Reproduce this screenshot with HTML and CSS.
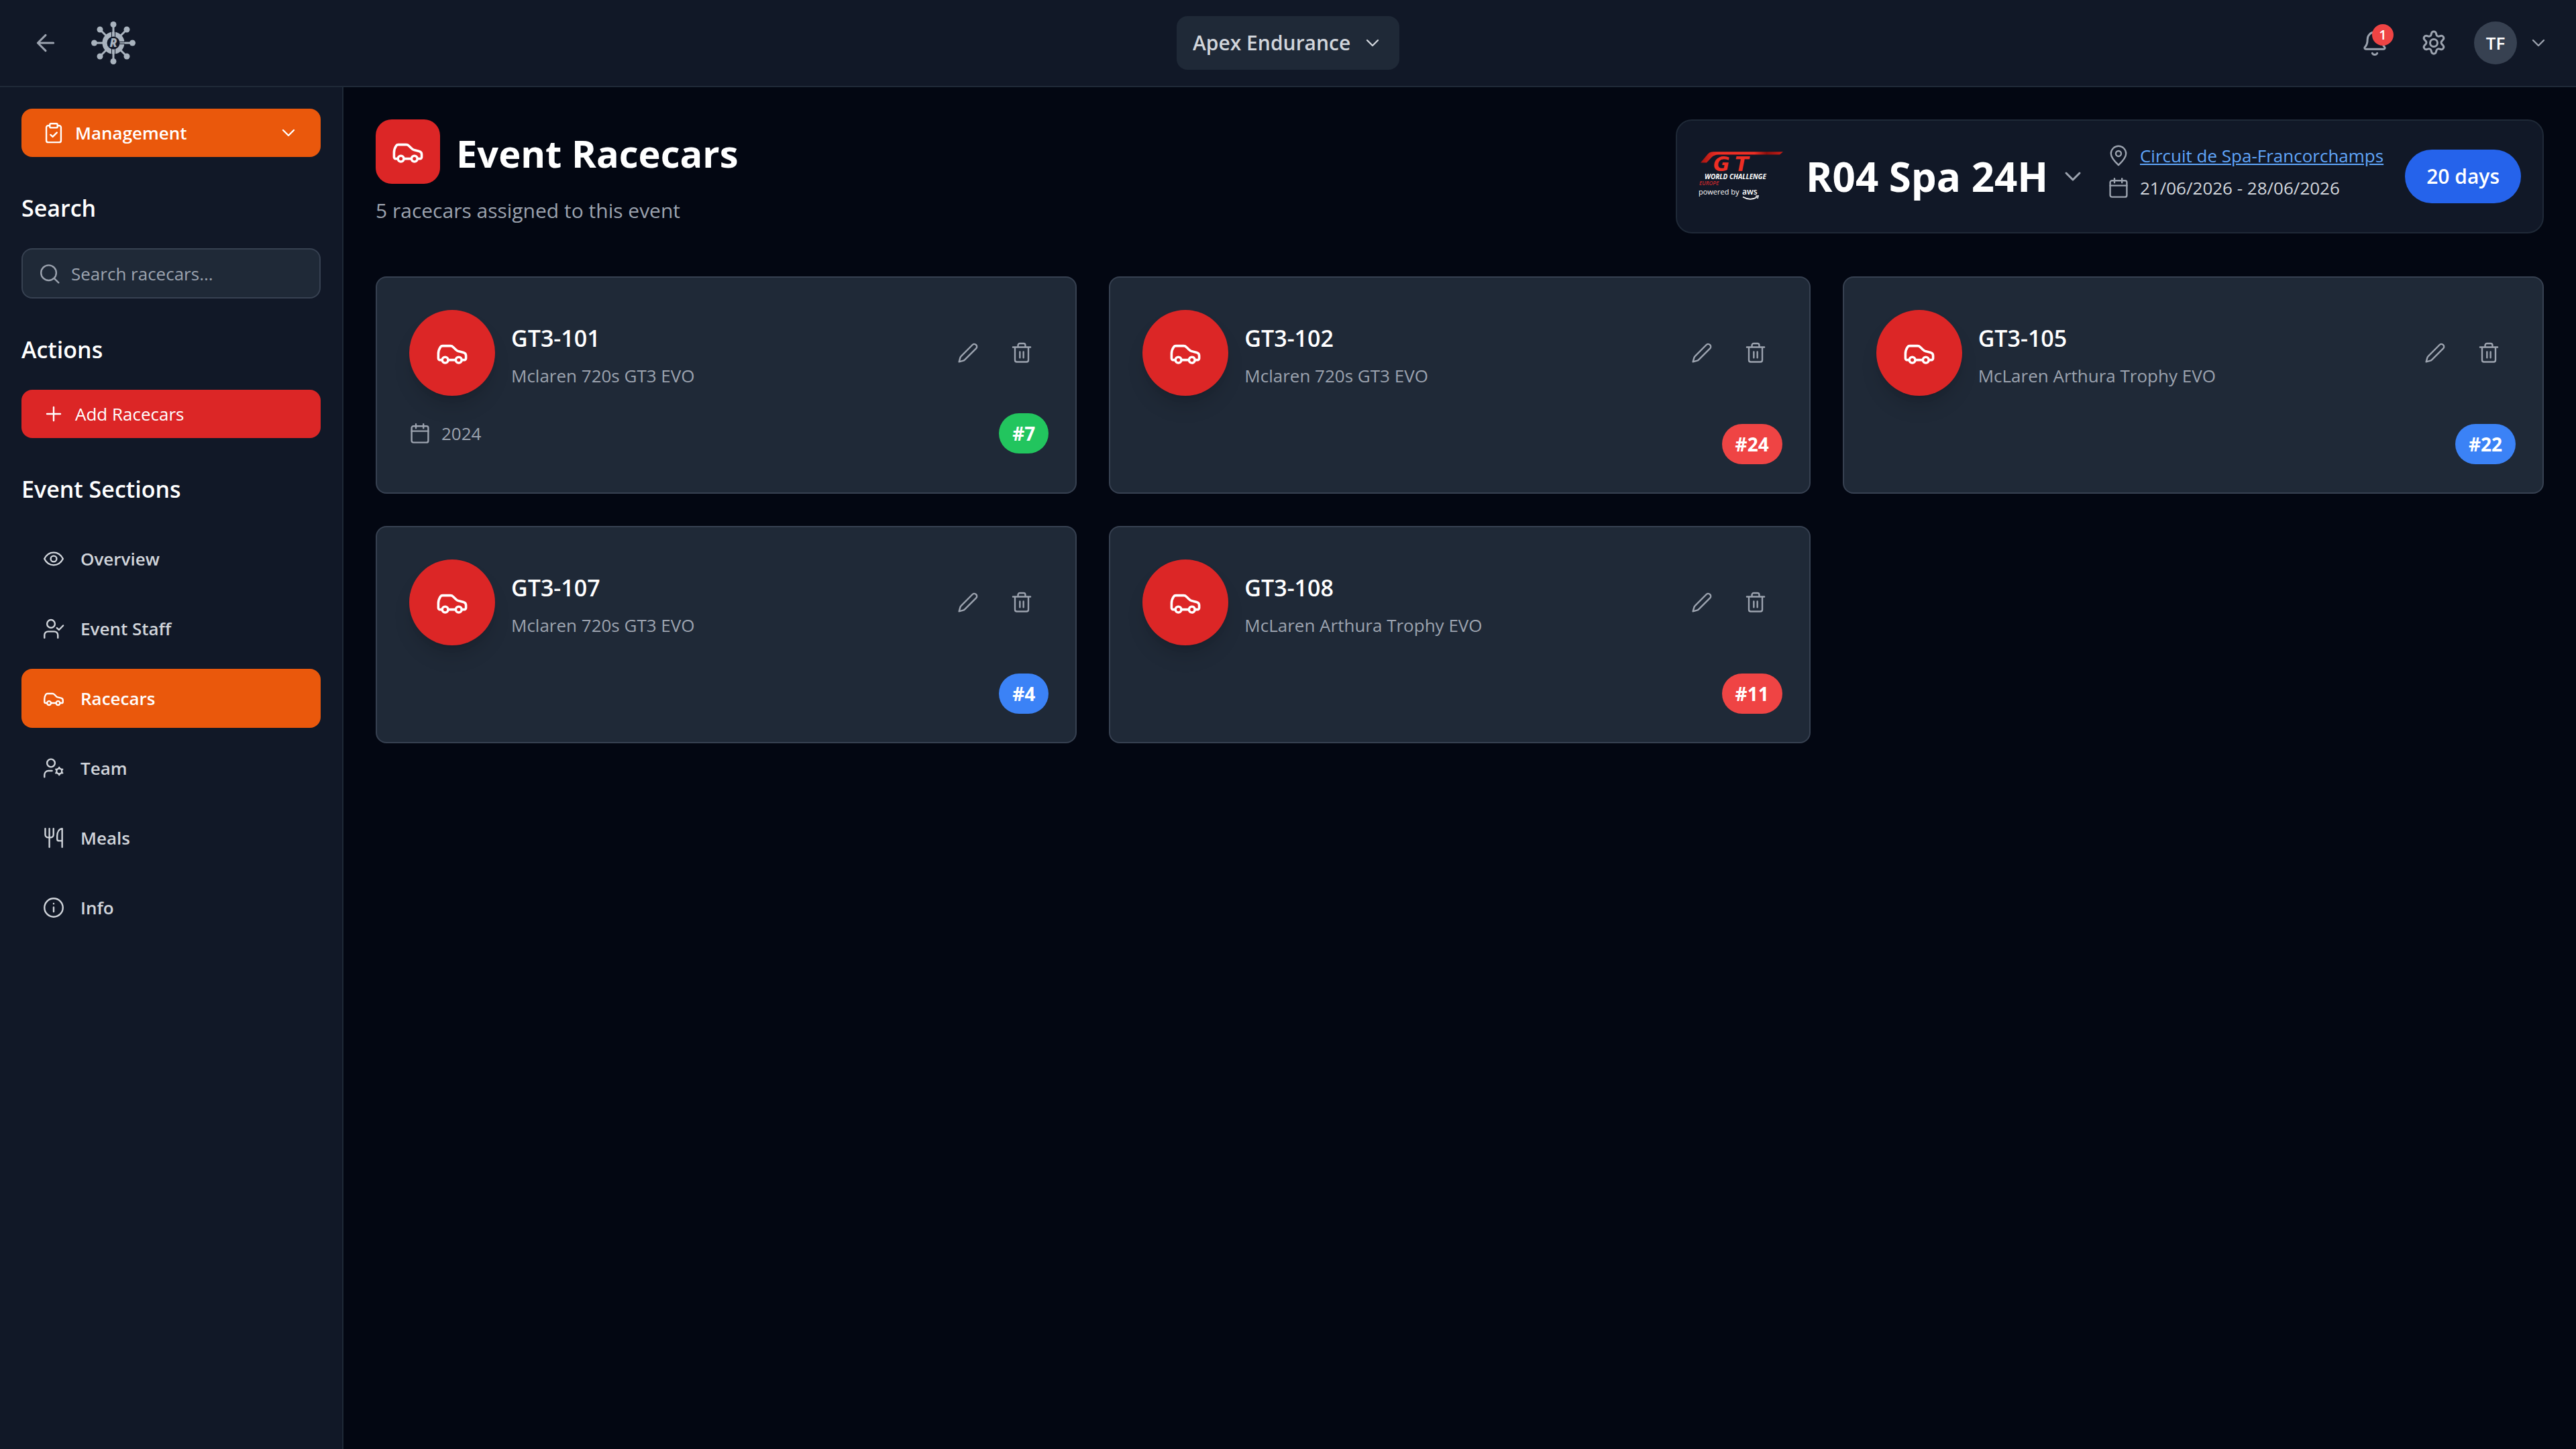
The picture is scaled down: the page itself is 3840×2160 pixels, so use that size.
FILE: index.html
```html
<!DOCTYPE html>
<html lang="en">
  <head>
    <meta charset="utf-8">
    <title>Event Racecars</title>
    <link rel="stylesheet" href="styles.css">
  </head>
  <body>
    <!-- icon sprite -->
    <svg class="sprite" aria-hidden="true">
      <symbol id="i-back" viewBox="0 0 24 24"><path d="M12 19l-7-7 7-7M19 12H5"/></symbol>
      <symbol id="i-chevron" viewBox="0 0 24 24"><path d="M6 9l6 6 6-6"/></symbol>
      <symbol id="i-bell" viewBox="0 0 24 24"><path d="M4.2 17.6c-1.2 0-1.7-1.2-.9-2 1.9-1.9 2.2-4 2.2-6.8a6.5 6.5 0 0 1 13 0c0 2.8.3 4.9 2.2 6.8.8.8.3 2-.9 2zM9.8 21.2c.5 1 1.2 1.3 2.2 1.3s1.7-.3 2.2-1.3"/></symbol>
      <symbol id="i-gear" viewBox="0 0 24 24"><circle cx="12" cy="12" r="3.3"/><path d="M10 3.300c.5-2.100 3.500-2.100 4 0l.4 1.400a2 2 0 0 0 2.400 1.400l1.400-.4c2.100-.6 3.600 2 2 3.500l-1 1.100a2 2 0 0 0 0 2.800l1 1c1.600 1.600.1 4.200-2 3.600l-1.400-.4a2 2 0 0 0-2.400 1.400l-.4 1.400c-.5 2.100-3.500 2.100-4 0l-.4-1.400a2 2 0 0 0-2.400-1.400l-1.400.4c-2.100.6-3.600-2-2-3.600l1-1a2 2 0 0 0 0-2.800l-1-1.100c-1.600-1.500-.1-4.100 2-3.500l1.400.4a2 2 0 0 0 2.400-1.400z"/></symbol>
      <symbol id="i-clipboard" viewBox="0 0 24 24"><path d="M7.5 3.900H5.800a2 2 0 0 0-2 2v14.700a2 2 0 0 0 2 2h12.400a2 2 0 0 0 2-2V5.900a2 2 0 0 0-2-2h-1.700M8.500 14.200l2.400 2.200 4.700-4.700"/><rect x="7.700" y="1.700" width="8.600" height="4.600" rx="1.300"/></symbol>
      <symbol id="i-search" viewBox="0 0 24 24"><circle cx="10.900" cy="11" r="8.500"/><path d="M17 17.100l5 4.900"/></symbol>
      <symbol id="i-plus" viewBox="0 0 24 24"><path d="M12 4.500v15M4.500 12h15"/></symbol>
      <symbol id="i-eye" viewBox="0 0 24 24"><path d="M1.600 12C4 7.300 7.700 5 12 5s8 2.300 10.400 7c-2.400 4.700-6.100 7-10.400 7s-8-2.300-10.400-7z"/><circle cx="12" cy="12" r="3.300"/></symbol>
      <symbol id="i-user-check" viewBox="0 0 24 24"><circle cx="9" cy="6.700" r="4.400"/><path d="M1.700 22.300v-3a4 4 0 0 1 4-4h7a4 4 0 0 1 4 4v3M15.600 11.300l2.300 2.200 4.700-4.900"/></symbol>
      <symbol id="i-user-gear" viewBox="0 0 24 24"><circle cx="9" cy="6.400" r="4.400"/><path d="M1.700 22v-2.500a4.500 4.500 0 0 1 4.500-4.500h4"/><circle cx="18.200" cy="15.400" r="3"/><path d="M18.200 12v-.8M18.200 18.800v.8M21.200 13.700l.7-.4M15.200 17.100l-.7.4M21.200 17.100l.7.4M15.200 13.700l-.7-.4"/></symbol>
      <symbol id="i-meals" viewBox="0 0 24 24"><path d="M2.600 1.600v6.900a3 3 0 0 0 3 3h3.200a3 3 0 0 0 3-3V1.600M7.200 1.600v20.800M21.500 22.400V1.600c-3.600.5-5.600 4-5.600 8.400v3.300a2 2 0 0 0 2 2h3.600"/></symbol>
      <symbol id="i-info" viewBox="0 0 24 24"><circle cx="12" cy="12" r="10.300"/><path d="M12 11.500v5M12 7.500v.1"/></symbol>
      <symbol id="i-car" viewBox="0 0 24 24"><path d="M4.500 17.300H2.900a1.200 1.200 0 0 1-1.200-1.200v-3.400c0-2 .8-3.900 1.600-5.100.4-.6 1-.8 1.600-.8h5.900c.8 0 1.400.3 2 .9l2.100 2.100c.5.5 1 .8 1.700 1l3.800.9c1.200.3 1.900 1.200 1.900 2.400v2a1.200 1.200 0 0 1-1.200 1.200h-1.900M9.100 17.300h5.500"/><circle cx="6.800" cy="17.300" r="2.200"/><circle cx="16.900" cy="17.300" r="2.200"/></symbol>
      <symbol id="i-calendar" viewBox="0 0 24 24"><rect x="2.700" y="3.900" width="18.600" height="18.300" rx="2"/><path d="M2.700 9.500h18.600M7.500 1.600v4.500M15.900 1.600v4.500"/></symbol>
      <symbol id="i-pencil" viewBox="0 0 24 24"><path d="M2 22l1.300-4.600c.2-.8.6-1.300 1.100-1.800L17 3a2.900 2.900 0 0 1 4.100 4.100L8.500 19.600c-.5.5-1 .9-1.800 1.100z"/></symbol>
      <symbol id="i-trash" viewBox="0 0 24 24"><path d="M2.200 5.600h19.600M4.500 5.600v14.500a2 2 0 0 0 2 2h11a2 2 0 0 0 2-2V5.600M7.900 5.600V3.500a2 2 0 0 1 2-2h4.200a2 2 0 0 1 2 2v2.100M10 10.800v6.700M14 10.800v6.700"/></symbol>
      <symbol id="i-pin" viewBox="0 0 24 24"><path d="M12 22.500C9.300 20 3.600 14.500 3.600 9.700a8.400 8.400 0 0 1 16.800 0c0 4.800-5.700 10.300-8.400 12.800z"/><circle cx="12" cy="9.700" r="3"/></symbol>
    </svg>

    <header class="topbar">
      <div class="topbar-left">
        <button class="icon-btn" aria-label="Back"><svg class="icon icon-md"><use href="#i-back"/></svg></button>
        <svg class="brand" viewBox="-33 -32 66 64" role="img" aria-label="Home">
          <path class="brand-spokes" d="M0-27V27M-28 0H28M-20-20L20 20M-20 20L20-20"/>
          <g class="brand-fill">
            <circle cy="-27.500" r="4.500"/><circle cy="27.500" r="4.500"/><circle cx="-28.500" r="4.500"/><circle cx="28.500" r="4.500"/>
            <circle cx="-20" cy="-20" r="4.500"/><circle cx="20" cy="-20" r="4.500"/><circle cx="-20" cy="20" r="4.500"/><circle cx="20" cy="20" r="4.500"/>
          </g>
          <circle class="brand-ring" r="13"/>
          <path class="brand-groove" d="M-2.500-17v8M2.500-17v8M-2.500 17V9M2.500 17V9M17-1.500H9M17 1.500H9"/>
          <text class="brand-letter" y="6" text-anchor="middle">R</text>
        </svg>
      </div>
      <label class="picker team-picker">
        <select aria-label="Team"><option>Apex Endurance</option></select>
        <svg class="icon"><use href="#i-chevron"/></svg>
      </label>
      <div class="topbar-right">
        <button class="icon-btn" aria-label="Notifications">
          <svg class="icon icon-md"><use href="#i-bell"/></svg>
          <span class="badge">1</span>
        </button>
        <button class="icon-btn" aria-label="Settings"><svg class="icon icon-md"><use href="#i-gear"/></svg></button>
        <button class="account" aria-label="Account">
          <span class="avatar">TF</span>
          <svg class="icon"><use href="#i-chevron"/></svg>
        </button>
      </div>
    </header>

    <div class="layout">
      <aside class="sidebar">
        <label class="picker mode-picker">
          <svg class="icon"><use href="#i-clipboard"/></svg>
          <select aria-label="Mode"><option>Management</option></select>
          <svg class="icon"><use href="#i-chevron"/></svg>
        </label>

        <section>
          <h2><label for="search">Search</label></h2>
          <div class="search-box">
            <svg class="icon"><use href="#i-search"/></svg>
            <input id="search" type="text" placeholder="Search racecars...">
          </div>
        </section>

        <section>
          <h2>Actions</h2>
          <button class="add-btn"><svg class="icon"><use href="#i-plus"/></svg>Add Racecars</button>
        </section>

        <section>
          <h2>Event Sections</h2>
          <nav>
            <a href="#"><svg class="icon"><use href="#i-eye"/></svg>Overview</a>
            <a href="#"><svg class="icon"><use href="#i-user-check"/></svg>Event Staff</a>
            <a href="#" class="active"><svg class="icon"><use href="#i-car"/></svg>Racecars</a>
            <a href="#"><svg class="icon"><use href="#i-user-gear"/></svg>Team</a>
            <a href="#"><svg class="icon"><use href="#i-meals"/></svg>Meals</a>
            <a href="#"><svg class="icon"><use href="#i-info"/></svg>Info</a>
          </nav>
        </section>
      </aside>

      <main>
        <div class="page-head">
          <div>
            <div class="page-title">
              <span class="title-icon"><svg class="icon icon-lg"><use href="#i-car"/></svg></span>
              <h1>Event Racecars</h1>
            </div>
            <p class="subtitle">5 racecars assigned to this event</p>
          </div>

          <div class="event-panel">
            <svg class="series-logo" viewBox="0 0 128 76" role="img" aria-label="GT World Challenge Europe powered by AWS">
              <defs>
                <linearGradient id="swoosh" x1="0" x2="1">
                  <stop offset="0" stop-color="#a3130f"/>
                  <stop offset=".2" stop-color="#ee2e24"/>
                  <stop offset=".65" stop-color="#ee2e24"/>
                  <stop offset=".8" stop-color="#8c0f0c"/>
                  <stop offset="1" stop-color="#c81e18"/>
                </linearGradient>
              </defs>
              <path fill="url(#swoosh)" d="M3 17.500L14 4.500Q17 1.300 22 1.300H126L121 5.500H30Q23 5.500 19 10L12 17.500z"/>
              <text class="logo-gt" x="22" y="30">G</text>
              <text class="logo-gt" x="54" y="30">T</text>
              <text class="logo-world" x="9" y="42">WORLD CHALLENGE</text>
              <text class="logo-europe" x="1" y="51">EUROPE</text>
              <text class="logo-power" x="0" y="65">powered by</text>
              <text class="logo-aws" x="65" y="65">aws</text>
              <path class="logo-smile" d="M66 68.500q11 6.500 21 .5M85 67.500l4-.5-1 4"/>
            </svg>
            <label class="picker event-picker">
              <select aria-label="Event"><option>R04 Spa 24H</option></select>
              <svg class="icon icon-md"><use href="#i-chevron"/></svg>
            </label>
            <div class="event-details">
              <div><svg class="icon"><use href="#i-pin"/></svg><a href="#">Circuit de Spa-Francorchamps</a></div>
              <div><svg class="icon"><use href="#i-calendar"/></svg><span>21/06/2026 - 28/06/2026</span></div>
            </div>
            <span class="days">20 days</span>
          </div>
        </div>

        <div class="cards">
          <article class="card">
            <div class="card-head">
              <span class="car-avatar"><svg class="icon icon-lg"><use href="#i-car"/></svg></span>
              <div class="car-name"><h3>GT3-101</h3><p>Mclaren 720s GT3 EVO</p></div>
              <div class="card-actions">
                <button aria-label="Edit"><svg class="icon"><use href="#i-pencil"/></svg></button>
                <button aria-label="Delete"><svg class="icon"><use href="#i-trash"/></svg></button>
              </div>
            </div>
            <div class="card-foot with-year">
              <span class="year"><svg class="icon"><use href="#i-calendar"/></svg>2024</span>
              <span class="number green">#7</span>
            </div>
          </article>
          <article class="card">
            <div class="card-head">
              <span class="car-avatar"><svg class="icon icon-lg"><use href="#i-car"/></svg></span>
              <div class="car-name"><h3>GT3-102</h3><p>Mclaren 720s GT3 EVO</p></div>
              <div class="card-actions">
                <button aria-label="Edit"><svg class="icon"><use href="#i-pencil"/></svg></button>
                <button aria-label="Delete"><svg class="icon"><use href="#i-trash"/></svg></button>
              </div>
            </div>
            <div class="card-foot"><span class="number red">#24</span></div>
          </article>
          <article class="card">
            <div class="card-head">
              <span class="car-avatar"><svg class="icon icon-lg"><use href="#i-car"/></svg></span>
              <div class="car-name"><h3>GT3-105</h3><p>McLaren Arthura Trophy EVO</p></div>
              <div class="card-actions">
                <button aria-label="Edit"><svg class="icon"><use href="#i-pencil"/></svg></button>
                <button aria-label="Delete"><svg class="icon"><use href="#i-trash"/></svg></button>
              </div>
            </div>
            <div class="card-foot"><span class="number blue">#22</span></div>
          </article>
          <article class="card">
            <div class="card-head">
              <span class="car-avatar"><svg class="icon icon-lg"><use href="#i-car"/></svg></span>
              <div class="car-name"><h3>GT3-107</h3><p>Mclaren 720s GT3 EVO</p></div>
              <div class="card-actions">
                <button aria-label="Edit"><svg class="icon"><use href="#i-pencil"/></svg></button>
                <button aria-label="Delete"><svg class="icon"><use href="#i-trash"/></svg></button>
              </div>
            </div>
            <div class="card-foot"><span class="number blue">#4</span></div>
          </article>
          <article class="card">
            <div class="card-head">
              <span class="car-avatar"><svg class="icon icon-lg"><use href="#i-car"/></svg></span>
              <div class="car-name"><h3>GT3-108</h3><p>McLaren Arthura Trophy EVO</p></div>
              <div class="card-actions">
                <button aria-label="Edit"><svg class="icon"><use href="#i-pencil"/></svg></button>
                <button aria-label="Delete"><svg class="icon"><use href="#i-trash"/></svg></button>
              </div>
            </div>
            <div class="card-foot"><span class="number red">#11</span></div>
          </article>
        </div>
      </main>
    </div>
  </body>
</html>
```

FILE: styles.css
```css
* {
  box-sizing: border-box;
}
body {
  margin: 0;
  min-height: 100vh;
  display: flex;
  flex-direction: column;
  background: #030712;
  color: #fff;
  font-family: "Open Sans", "Noto Sans", sans-serif;
  font-size: 26px;
  line-height: 40px;
}
h1, h2, h3, p {
  margin: 0;
}
button, input, select {
  font: inherit;
  color: inherit;
  border: none;
  background: none;
  padding: 0;
  margin: 0;
}
button, select {
  cursor: pointer;
}
select {
  appearance: none;
  outline: none;
}
select option {
  background: #1f2937;
}

/* icons */
.sprite {
  position: absolute;
  width: 0;
  height: 0;
}
.icon {
  flex: none;
  display: block;
  width: 32px;
  height: 32px;
  fill: none;
  stroke: currentColor;
  stroke-width: 1.8;
  stroke-linecap: round;
  stroke-linejoin: round;
}
.icon-md {
  width: 40px;
  height: 40px;
}
.icon-lg {
  width: 48px;
  height: 48px;
}

/* top bar */
.topbar {
  display: grid;
  grid-template-columns: 1fr auto 1fr;
  align-items: center;
  height: 130px;
  padding: 0 32px;
  background: #111827;
  border-bottom: 2px solid #1f2937;
  color: #9ca3af;
}
.topbar-left,
.topbar-right {
  display: flex;
  align-items: center;
  gap: 16px;
}
.topbar-left {
  gap: 32px;
}
.topbar-right {
  justify-content: flex-end;
}
.icon-btn {
  position: relative;
  padding: 16px;
}
.badge {
  position: absolute;
  top: 8px;
  right: 8px;
  width: 32px;
  height: 32px;
  border-radius: 50%;
  background: #ef4444;
  color: #fff;
  font-size: 20px;
  font-weight: 600;
  line-height: 32px;
}
.account {
  display: flex;
  align-items: center;
  gap: 16px;
  padding: 8px;
}
.avatar {
  width: 64px;
  height: 64px;
  border-radius: 50%;
  background: #374151;
  color: #fff;
  font-weight: 600;
  line-height: 64px;
}
.brand {
  width: 66px;
  height: 64px;
}
.brand-spokes {
  stroke: #a9b3be;
  stroke-width: 3;
}
.brand-fill {
  fill: #a9b3be;
}
.brand-ring {
  fill: #111827;
  stroke: #a9b3be;
  stroke-width: 7;
}
.brand-groove {
  stroke: #111827;
  stroke-width: 1;
}
.brand-letter {
  fill: #a9b3be;
  font-size: 17px;
  font-weight: 800;
  font-style: italic;
}

/* drop-downs */
.picker {
  display: flex;
  align-items: center;
  gap: 16px;
  cursor: pointer;
}
.team-picker {
  height: 80px;
  padding: 0 24px;
  border-radius: 16px;
  background: #1f2937;
  color: #d1d5db;
  font-size: 30px;
  font-weight: 600;
}
.mode-picker {
  height: 72px;
  padding: 0 32px;
  border-radius: 16px;
  background: #ea580c;
  font-weight: 600;
}
.mode-picker select {
  flex: 1;
  min-width: 0;
}

/* sidebar */
.layout {
  flex: 1;
  display: flex;
}
.sidebar {
  flex: none;
  width: 512px;
  padding: 32px;
  background: #111827;
  border-right: 2px solid #1f2937;
}
.sidebar section {
  margin-top: 48px;
}
.sidebar h2 {
  margin-bottom: 32px;
  font-size: 34px;
  font-weight: 600;
  line-height: 56px;
}
.search-box {
  display: flex;
  align-items: center;
  gap: 16px;
  height: 75px;
  padding: 0 24px;
  border: 2px solid #374151;
  border-radius: 16px;
  background: #1f2937;
  color: #9ca3af;
}
.search-box input {
  flex: 1;
  min-width: 0;
  outline: none;
}
.search-box input::placeholder {
  color: #9ca3af;
}
.add-btn {
  display: flex;
  align-items: center;
  gap: 16px;
  width: 100%;
  height: 72px;
  padding: 0 32px;
  border-radius: 16px;
  background: #dc2626;
  font-weight: 500;
}
nav {
  display: flex;
  flex-direction: column;
  gap: 16px;
}
nav a {
  display: flex;
  align-items: center;
  gap: 24px;
  height: 88px;
  padding: 0 32px;
  border-radius: 16px;
  color: #d1d5db;
  font-weight: 600;
  text-decoration: none;
}
nav a.active {
  background: #ea580c;
  color: #fff;
}

/* page head */
main {
  flex: 1;
  min-width: 0;
  padding: 48px;
}
.page-head {
  display: flex;
  justify-content: space-between;
  align-items: flex-start;
  margin-bottom: 64px;
}
.page-title {
  display: flex;
  align-items: center;
  gap: 24px;
}
.title-icon {
  display: flex;
  align-items: center;
  justify-content: center;
  width: 96px;
  height: 96px;
  border-radius: 24px;
  background: #dc2626;
}
h1 {
  padding-top: 4px;
  font-size: 56px;
  font-weight: 700;
  line-height: 72px;
}
.subtitle {
  margin-top: 16px;
  color: #9ca3af;
  font-size: 30px;
  line-height: 48px;
}
.event-panel {
  display: flex;
  align-items: center;
  gap: 32px;
  padding: 32px;
  border: 2px solid #1f2937;
  border-radius: 24px;
  background: #111827;
}
.series-logo {
  width: 128px;
  height: 76px;
}
.logo-gt {
  fill: #ee2e24;
  font-family: "DejaVu Sans", sans-serif;
  font-size: 30px;
  font-weight: 700;
  font-style: italic;
}
.logo-world {
  fill: #fff;
  font-size: 10px;
  font-weight: 700;
  font-style: italic;
}
.logo-europe {
  fill: #c3272b;
  font-size: 8px;
  font-weight: 600;
  font-style: italic;
}
.logo-power {
  fill: #fff;
  font-size: 11px;
}
.logo-aws {
  fill: #fff;
  font-size: 12px;
  font-weight: 600;
}
.logo-smile {
  fill: none;
  stroke: #fff;
  stroke-width: 1.5;
}
.event-picker {
  font-size: 60px;
  font-weight: 700;
  line-height: 72px;
}
.event-picker .icon {
  color: #9ca3af;
}
.event-details {
  display: flex;
  flex-direction: column;
  gap: 8px;
  padding-bottom: 14px;
  color: #d1d5db;
}
.event-details div {
  display: flex;
  align-items: center;
  gap: 16px;
}
.event-details .icon {
  color: #9ca3af;
}
.event-details a {
  color: #60a5fa;
}
.days {
  padding: 0 32px;
  border-radius: 40px;
  background: #2563eb;
  font-size: 30px;
  font-weight: 600;
  line-height: 80px;
}

/* racecar cards */
.cards {
  display: grid;
  grid-template-columns: repeat(3, 1fr);
  gap: 48px;
}
.card {
  padding: 48px 48px 42px;
  border: 2px solid #374151;
  border-radius: 16px;
  background: #1f2937;
  color: #9ca3af;
}
.card-head {
  display: flex;
  gap: 24px;
}
.car-avatar {
  flex: none;
  display: flex;
  align-items: center;
  justify-content: center;
  width: 128px;
  height: 128px;
  border-radius: 50%;
  background: #dc2626;
  color: #fff;
  box-shadow: 0 20px 30px -6px rgba(0, 0, 0, 0.15), 0 8px 12px -8px rgba(0, 0, 0, 0.15);
}
.car-name {
  flex: 1;
  padding-top: 14px;
}
.car-name h3 {
  margin-bottom: 8px;
  color: #fff;
  font-size: 34px;
  font-weight: 600;
  line-height: 56px;
}
.card-actions {
  display: flex;
  gap: 16px;
  height: 128px;
  align-items: center;
}
.card-actions button {
  padding: 16px;
}
.card-foot {
  display: flex;
  align-items: center;
  margin-top: 42px;
  margin-right: -8px;
}
.card-foot.with-year {
  margin-top: 26px;
}
.year {
  display: flex;
  align-items: center;
  gap: 16px;
}
.number {
  margin-left: auto;
  padding: 0 20px;
  border-radius: 30px;
  color: #fff;
  font-size: 28px;
  font-weight: 700;
  line-height: 60px;
}
.green {
  background: #22c55e;
}
.red {
  background: #ef4444;
}
.blue {
  background: #3b82f6;
}
```
